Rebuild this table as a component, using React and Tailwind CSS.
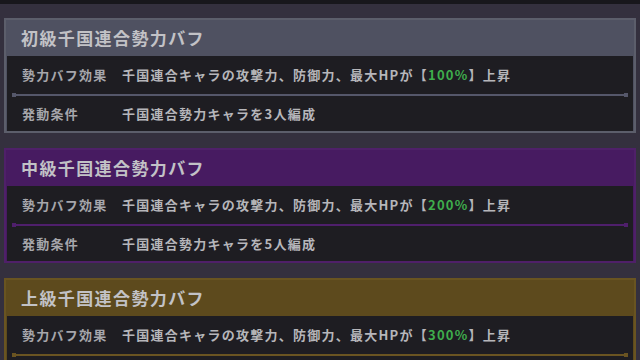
import React from 'react';

const tiers = [
    {
        title: '初級千国連合勢力バフ',
        pct: '100%',
        count: '3',
        header: 'bg-[#4f5161]',
        border: 'border-[#5c5e6b]',
        line: 'bg-[#55576a]',
    },
    {
        title: '中級千国連合勢力バフ',
        pct: '200%',
        count: '5',
        header: 'bg-[#471b61]',
        border: 'border-[#4f2069]',
        line: 'bg-[#4f1f6c]',
    },
    {
        title: '上級千国連合勢力バフ',
        pct: '300%',
        count: '7',
        header: 'bg-[#5d4a1d]',
        border: 'border-[#695421]',
        line: 'bg-[#6a5422]',
    },
];

function Divider({ line }) {
    return (
        <div className="h-[4px] flex items-center px-[5px]">
            <div className={`w-[4px] h-[4px] ${line}`} />
            <div className={`flex-1 h-[2px] ${line}`} />
            <div className={`w-[4px] h-[4px] ${line}`} />
        </div>
    );
}

function BuffCard({ tier }) {
    return (
        <div className={`border-2 ${tier.border} ${tier.header}`}>
            <div className="h-[36px] flex items-center pl-[15px] text-[17px] font-bold tracking-[1.4px] text-[#c2c2c6]">
                {tier.title}
            </div>
            <div className="bg-[#1e1d22] mx-[1px]">
                <div className="h-[37px] flex items-center pl-[15px] text-[13px] font-bold tracking-[1.25px] text-[#b6b6ba]">
                    <span className="w-[100px] text-[#a6a6ab]">勢力バフ効果</span>
                    <span>
                        千国連合キャラの攻撃力、防御力、最大HPが【<span className="text-[#3fae4c]">{tier.pct}</span>】上昇
                    </span>
                </div>
                <Divider line={tier.line} />
                <div className="h-[34px] flex items-center pl-[15px] text-[13px] font-bold tracking-[1.25px] text-[#b6b6ba]">
                    <span className="w-[100px] text-[#a6a6ab]">発動条件</span>
                    <span>千国連合勢力キャラを{tier.count}人編成</span>
                </div>
            </div>
        </div>
    );
}

export default function App() {
    return (
        <div
            className="w-[640px] h-[360px] overflow-hidden bg-[#34303e]"
            style={{ fontFamily: '"Noto Sans CJK JP", "Noto Sans", sans-serif' }}
        >
            <div className="h-[4px] bg-[#18171c]" />
            <div className="flex flex-col gap-[15px] px-[4px] pt-[14px]">
                {tiers.map((t) => (
                    <BuffCard key={t.title} tier={t} />
                ))}
            </div>
        </div>
    );
}
